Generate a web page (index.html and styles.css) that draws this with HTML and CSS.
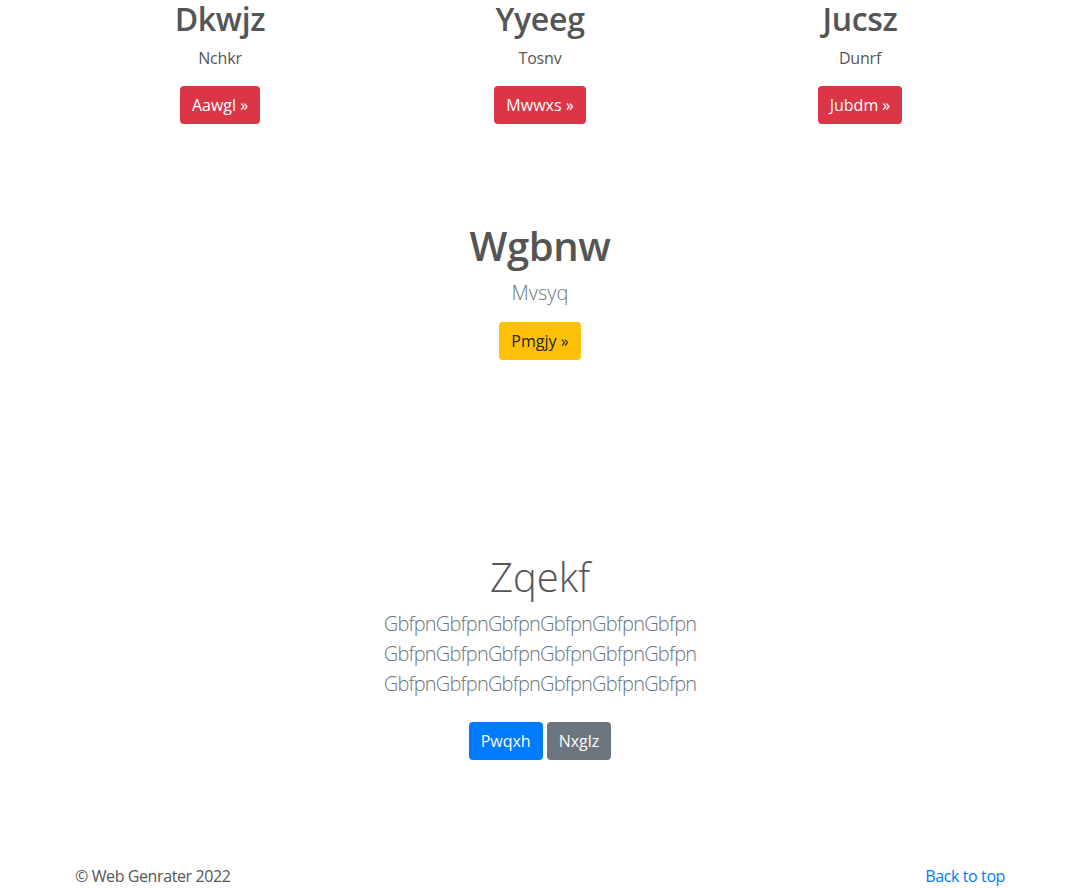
FILE: index.html
```html
<!DOCTYPE html>
<html lang="en">
<head>
<meta charset="utf-8">
<title>Page</title>
<link rel="stylesheet" href="styles.css">
</head>
<body>
<main>
  <section class="container features">
    <div class="col">
      <h2 class="feat-title">Dkwjz</h2>
      <p class="feat-text">Nchkr</p>
      <a class="btn btn-danger" href="#">Aawgl &raquo;</a>
    </div>
    <div class="col">
      <h2 class="feat-title">Yyeeg</h2>
      <p class="feat-text">Tosnv</p>
      <a class="btn btn-danger" href="#">Mwwxs &raquo;</a>
    </div>
    <div class="col">
      <h2 class="feat-title">Jucsz</h2>
      <p class="feat-text">Dunrf</p>
      <a class="btn btn-danger" href="#">Jubdm &raquo;</a>
    </div>
  </section>

  <section class="container promo">
    <h1 class="promo-title">Wgbnw</h1>
    <p class="lead">Mvsyq</p>
    <a class="btn btn-warning" href="#">Pmgjy &raquo;</a>
  </section>

  <section class="container hero">
    <h1 class="hero-title">Zqekf</h1>
    <p class="lead hero-lead">GbfpnGbfpnGbfpnGbfpnGbfpnGbfpn<br>GbfpnGbfpnGbfpnGbfpnGbfpnGbfpn<br>GbfpnGbfpnGbfpnGbfpnGbfpnGbfpn</p>
    <div class="hero-actions">
      <a class="btn btn-primary" href="#">Pwqxh</a>
      <a class="btn btn-secondary" href="#">Nxglz</a>
    </div>
  </section>
</main>

<footer class="container footer">
  <p class="copy">&copy; Web Genrater 2022</p>
  <a class="back" href="#">Back to top</a>
</footer>
</body>
</html>
```
FILE: styles.css
```css
* { box-sizing: border-box; }

html, body {
  margin: 0;
  padding: 0;
}

body {
  font-family: "Open Sans", "Noto Sans", "Liberation Sans", sans-serif;
  font-size: 16px;
  line-height: 1.5;
  color: #555555;
  background: #ffffff;
}

.container {
  width: 960px;
  margin: 0 auto;
  padding: 0 15px;
}

h1, h2, p { margin: 0; }

.features {
  display: flex;
  padding: 0;
}

.col {
  flex: 1 1 0;
  text-align: center;
  padding: 0 15px;
}

.feat-title {
  font-size: 32px;
  font-weight: 600;
  line-height: 1.2;
  letter-spacing: -0.3px;
  margin-bottom: 8px;
}

.feat-text {
  margin-bottom: 16px;
  letter-spacing: -0.2px;
}

.btn {
  display: inline-block;
  font-size: 16px;
  line-height: 24px;
  padding: 7px 12px;
  border-radius: 4px;
  text-decoration: none;
  color: #ffffff;
  font-weight: 400;
}

.btn-danger { background: #dc3545; }
.btn-warning { background: #ffc107; color: #212529; }
.btn-primary { background: #007bff; }
.btn-secondary { background: #6c757d; }

.promo {
  text-align: center;
  padding-top: 98px;
}

.promo-title {
  font-size: 40px;
  font-weight: 600;
  line-height: 1.2;
  letter-spacing: -0.4px;
  margin-bottom: 8px;
}

.lead {
  font-size: 20px;
  font-weight: 300;
  line-height: 30px;
  color: #6c757d;
  margin-bottom: 14px;
}

.hero {
  text-align: center;
  padding-top: 193px;
}

.hero-title {
  font-size: 40px;
  font-weight: 300;
  line-height: 1.2;
  margin-bottom: 8px;
}

.hero-lead {
  margin-bottom: 23px;
  letter-spacing: -0.8px;
}

.hero-actions {
  display: flex;
  justify-content: center;
  gap: 4px;
}

.footer {
  display: flex;
  justify-content: space-between;
  align-items: center;
  padding-top: 104px;
  padding-bottom: 48px;
}

.copy {
  margin: 0;
  letter-spacing: -0.4px;
}

.back {
  color: #007bff;
  text-decoration: none;
  letter-spacing: -0.4px;
}
```
